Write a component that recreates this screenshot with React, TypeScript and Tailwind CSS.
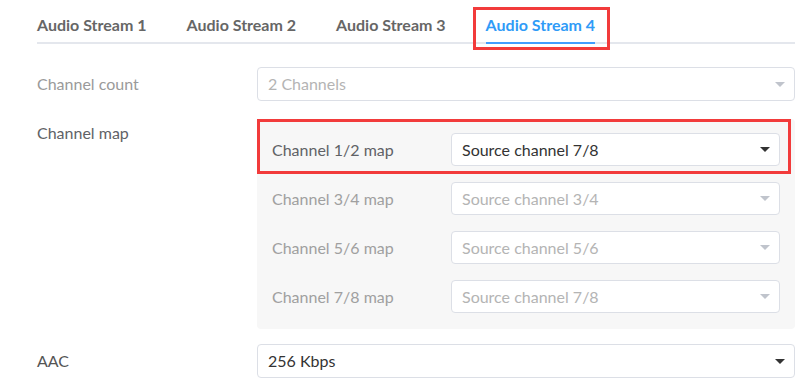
import React from "react";

const tabs = ["Audio Stream 1", "Audio Stream 2", "Audio Stream 3", "Audio Stream 4"];

function Caret(props: { dark?: boolean }) {
  return (
    <svg width="10" height="5" viewBox="0 0 10 5" className="shrink-0">
      <path d="M0 0 L10 0 L5 5 Z" fill={props.dark ? "#333333" : "#c0c4cc"} />
    </svg>
  );
}

function Select(props: { value: string; disabled?: boolean; className?: string }) {
  return (
    <div
      className={[
        "flex items-center justify-between rounded-[4px] border border-[#dcdfe6] bg-white pl-[10px] pr-[9px] text-[16px]",
        props.disabled ? "text-[#b4b4b4]" : "text-[#333333]",
        props.className ?? "",
      ].join(" ")}
    >
      <span>{props.value}</span>
      <Caret dark={!props.disabled} />
    </div>
  );
}

export default function App() {
  const mapRows = [
    { label: "Channel 1/2 map", value: "Source channel 7/8", on: true },
    { label: "Channel 3/4 map", value: "Source channel 3/4", on: false },
    { label: "Channel 5/6 map", value: "Source channel 5/6", on: false },
    { label: "Channel 7/8 map", value: "Source channel 7/8", on: false },
  ];

  return (
    <div className="h-[392px] w-[802px] overflow-hidden bg-white pl-[37px] pr-[7px] font-['Lato','Noto_Sans',sans-serif]">
      {/* tabs */}
      <div className="flex h-[44px] items-end gap-[40px] border-b-2 border-[#e4e7ed]">
        {tabs.map((t, i) => {
          const active = i === 3;
          return (
            <div
              key={t}
              className={[
                "relative -mb-[2px] pb-[7px] text-[16px] font-bold leading-[20px]",
                active ? "border-b-2 border-[#409eff] text-[#2f9bf7]" : "border-b-2 border-transparent text-[#666666]",
              ].join(" ")}
            >
              {t}
              {active ? (
                <div className="pointer-events-none absolute -left-[13px] -right-[15px] -top-[8px] -bottom-[8px] border-[3px] border-[#f23b3b]" />
              ) : null}
            </div>
          );
        })}
      </div>

      {/* channel count */}
      <div className="mt-[23px] flex">
        <div className="flex w-[220px] items-center text-[16px] text-[#9a9a9a]">Channel count</div>
        <Select value="2 Channels" disabled className="h-[34px] flex-1" />
      </div>

      {/* channel map */}
      <div className="mt-[18px] flex">
        <div className="w-[220px] pt-[4px] text-[16px] leading-[20px] text-[#606266]">Channel map</div>
        <div className="flex flex-1 flex-col gap-[16px] rounded-[4px] bg-[#f7f7f7] pb-[16px] pl-[15px] pr-[15px] pt-[14px]">
          {mapRows.map((r) => (
            <div key={r.label} className="relative flex items-center">
              <div className={["w-[179px] text-[16px]", r.on ? "text-[#606266]" : "text-[#a0a0a0]"].join(" ")}>
                {r.label}
              </div>
              <Select value={r.value} disabled={!r.on} className="h-[33px] flex-1" />
              {r.on ? (
                <div className="pointer-events-none absolute -left-[15px] -right-[11px] -top-[14px] -bottom-[8px] border-[3px] border-[#f23b3b]" />
              ) : null}
            </div>
          ))}
        </div>
      </div>

      {/* aac */}
      <div className="mt-[15px] flex">
        <div className="flex w-[220px] items-center text-[16px] text-[#555555]">AAC</div>
        <Select value="256 Kbps" className="h-[34px] flex-1" />
      </div>
    </div>
  );
}
